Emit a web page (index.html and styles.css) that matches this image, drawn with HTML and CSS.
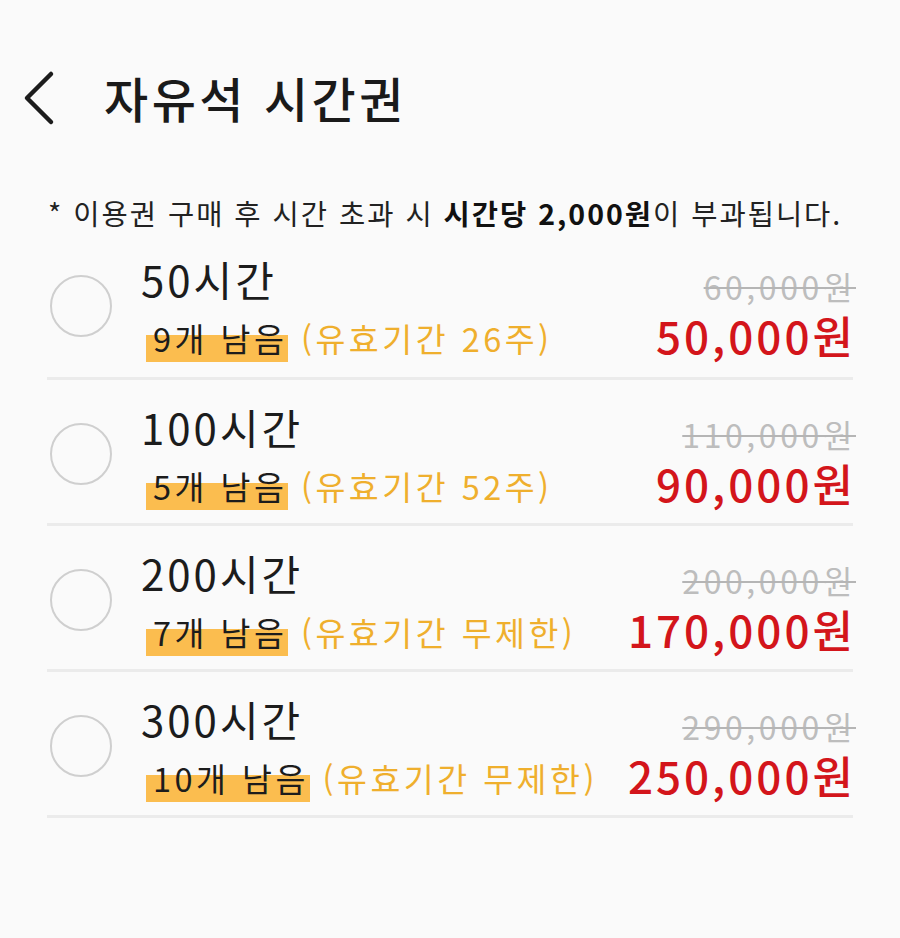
FILE: index.html
```html
<!DOCTYPE html>
<html lang="ko">
<head>
<meta charset="utf-8">
<link rel="stylesheet" href="styles.css">
</head>
<body>
<div class="app">
  <header class="topbar">
    <svg class="back" width="34" height="56" viewBox="0 0 34 56"><path d="M28 4 L4 28 L28 52" fill="none" stroke="#1c1c1c" stroke-width="4.5" stroke-linecap="round" stroke-linejoin="round"/></svg>
    <h1 class="title">자유석 시간권</h1>
  </header>
  <p class="note">* 이용권 구매 후 시간 초과 시 <b>시간당 2,000원</b>이 부과됩니다.</p>
  <ul class="list">
    <li class="item">
      <span class="radio"></span>
      <div class="info">
        <div class="name">50시간</div>
        <div class="sub"><span class="left">9개 남음</span> <span class="valid">(유효기간 26주)</span></div>
      </div>
      <div class="price">
        <div class="old">60,000원</div>
        <div class="new">50,000원</div>
      </div>
    </li>
    <li class="item">
      <span class="radio"></span>
      <div class="info">
        <div class="name">100시간</div>
        <div class="sub"><span class="left">5개 남음</span> <span class="valid">(유효기간 52주)</span></div>
      </div>
      <div class="price">
        <div class="old">110,000원</div>
        <div class="new">90,000원</div>
      </div>
    </li>
    <li class="item">
      <span class="radio"></span>
      <div class="info">
        <div class="name">200시간</div>
        <div class="sub"><span class="left">7개 남음</span> <span class="valid">(유효기간 무제한)</span></div>
      </div>
      <div class="price">
        <div class="old">200,000원</div>
        <div class="new">170,000원</div>
      </div>
    </li>
    <li class="item">
      <span class="radio"></span>
      <div class="info">
        <div class="name">300시간</div>
        <div class="sub"><span class="left wide">10개 남음</span> <span class="valid">(유효기간 무제한)</span></div>
      </div>
      <div class="price">
        <div class="old">290,000원</div>
        <div class="new">250,000원</div>
      </div>
    </li>
  </ul>
</div>
</body>
</html>
```
FILE: styles.css
```css
* { box-sizing: border-box; }
html, body { margin: 0; padding: 0; }
body {
  background: #fafafa;
  font-family: "Noto Sans CJK KR", "Noto Sans", sans-serif;
  color: #1c1c1c;
}
.app { width: 900px; height: 938px; }
.topbar {
  display: flex;
  align-items: center;
  height: 194px;
  padding-left: 23px;
}
.back { display: block; margin-top: 2px; }
.title {
  margin: 0 0 0 47px;
  font-size: 48px;
  font-weight: 500;
  letter-spacing: 3.5px;
  line-height: 1;
  color: #1a1a1a;
}
.note {
  margin: 0;
  padding-left: 48px;
  height: 38px;
  line-height: 38px;
  font-size: 28.5px;
  letter-spacing: 2px;
  color: #222;
  white-space: nowrap;
}
.note b { font-weight: 700; color: #111; }
.list {
  list-style: none;
  margin: 0;
  padding: 0 47px;
}
.item {
  display: flex;
  align-items: flex-start;
  height: 148px;
  border-bottom: 3px solid #ebebeb;
}
.item + .item { height: 146px; }
.radio {
  flex: none;
  width: 62px;
  height: 62px;
  margin: 43px 0 0 3px;
  border: 2.5px solid #cfcfcf;
  border-radius: 50%;
}
.info {
  flex: 1;
  padding: 21px 0 0 29px;
}
.name {
  height: 52px;
  line-height: 52px;
  font-size: 42px;
  font-weight: 400;
  letter-spacing: 3px;
  color: #1c1c1c;
}
.sub {
  margin-top: 9px;
  height: 48px;
  line-height: 48px;
  font-size: 32.5px;
  letter-spacing: 3.5px;
  white-space: nowrap;
}
.left {
  display: inline-block;
  margin-left: 5px;
  padding: 0 1px 0 7px;
  line-height: 48px;
  background: linear-gradient(to bottom, transparent 0, transparent 44%, #fbbd4f 44%, #fbbd4f 100%);
  color: #1c1c1c;
}
.valid { color: #efaf2d; }
.price {
  flex: none;
  text-align: right;
  padding-top: 32px;
  margin-right: -3px;
}
.old {
  height: 44px;
  line-height: 44px;
  font-size: 32px;
  letter-spacing: 3.6px;
  color: #bdbdbd;
  text-decoration: line-through;
  text-decoration-thickness: 2px;
  text-decoration-color: #b5b5b5;
}
.new {
  height: 54px;
  line-height: 54px;
  font-size: 44px;
  font-weight: 500;
  letter-spacing: 3px;
  color: #d3151b;
}
```
